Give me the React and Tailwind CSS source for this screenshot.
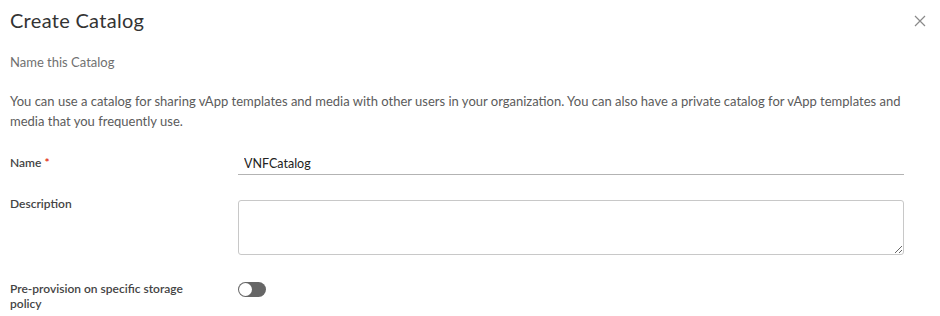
import React, { useState } from 'react';

const CreateCatalog = () => {
  const [name, setName] = useState('VNFCatalog');
  const [description, setDescription] = useState('');
  const [preProvision, setPreProvision] = useState(false);

  return (
    <div className="w-[940px] h-[316px] bg-white overflow-hidden font-['Lato','Noto_Sans',sans-serif] text-[#313131]">
      {/* Header */}
      <div className="flex items-start justify-between pl-[10px] pr-[14px] pt-[8px]">
        <h2 className="text-[20px] leading-[24px] tracking-[0.3px] font-normal text-[#333]">Create Catalog</h2>
        <button className="mt-[7px] text-[#8a8a8a]">
          <svg width="12" height="12" viewBox="0 0 12 12" stroke="currentColor" strokeWidth="1.2">
            <path d="M1 1 L11 11 M11 1 L1 11" />
          </svg>
        </button>
      </div>

      <p className="mt-[22px] pl-[10px] text-[13px] leading-[16px] text-[#707070]">Name this Catalog</p>

      <p className="mt-[21px] pl-[10px] pr-[30px] text-[13px] leading-[20px] text-[#5b5b5b]">
        You can use a catalog for sharing vApp templates and media with other users in your organization. You can also have a private catalog for vApp templates and media that you frequently use.
      </p>

      {/* Form */}
      <div className="mt-[21px] pl-[10px] pr-[36px] flex flex-col">
        <div className="flex items-start">
          <label className="w-[228px] pt-[3px] text-[12px] leading-[16px] font-semibold text-[#444]">
            Name <span className="text-[#e12200]">*</span>
          </label>
          <input
            value={name}
            onChange={(e) => setName(e.target.value)}
            className="flex-1 h-[23px] px-[6px] text-[12.5px] text-[#222] border-b border-[#b3b3b3] outline-none"
          />
        </div>

        <div className="flex items-start mt-[17px]">
          <label className="w-[228px] pt-[4px] text-[12px] leading-[16px] font-semibold text-[#444]">Description</label>
          <textarea
            value={description}
            onChange={(e) => setDescription(e.target.value)}
            className="flex-1 mt-[8px] h-[55px] border border-[#c8c8c8] rounded-[3px] outline-none text-[12px] p-[4px]"
          />
        </div>

        <div className="flex items-start mt-[26px]">
          <label className="w-[228px] pr-[40px] text-[12px] leading-[15px] font-semibold text-[#444]">
            Pre-provision on specific storage policy
          </label>
          <button
            onClick={() => setPreProvision(!preProvision)}
            className={`mt-[1px] w-[28px] h-[15px] rounded-full flex items-center px-[1px] ${preProvision ? 'bg-[#0072a3] justify-end' : 'bg-[#666] justify-start'}`}
          >
            <span className="w-[13px] h-[13px] rounded-full bg-white" />
          </button>
        </div>
      </div>
    </div>
  );
};

export default function App() {
  return <CreateCatalog />;
}
